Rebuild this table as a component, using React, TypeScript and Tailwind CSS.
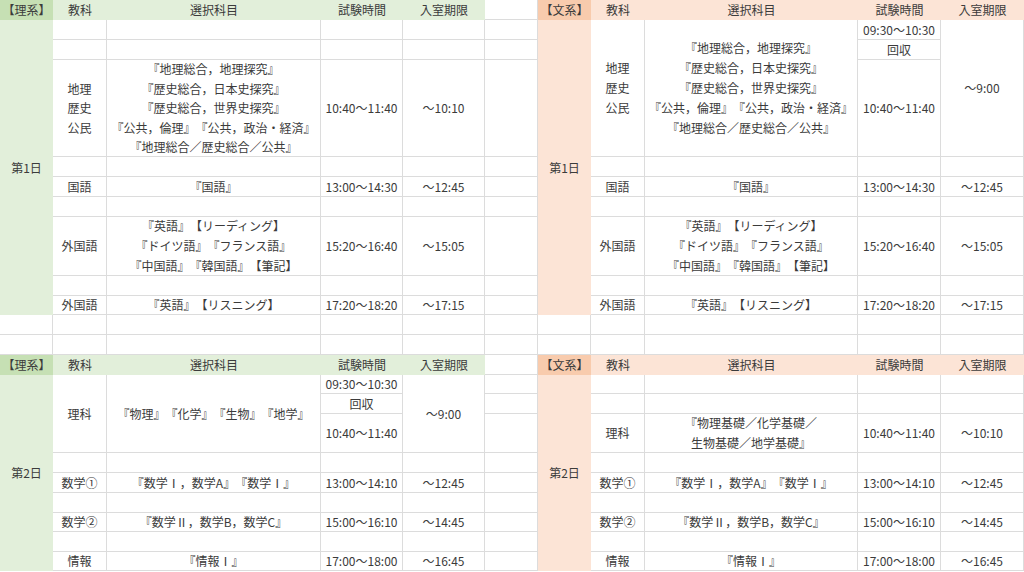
import type { ReactNode } from "react";

type Tone = "w" | "g" | "G" | "o" | "O";

// Excel-ish fills: filled cells hide their gridlines
const TONES: Record<Tone, string> = {
  w: "bg-white border-r border-b border-[#dcdcdc]",
  g: "bg-[#e2efda]",
  G: "bg-[#c6e0b4]",
  o: "bg-[#fce4d6]",
  O: "bg-[#f8cbad]",
};

function Cell({
  tone = "w",
  span = "",
  children,
}: {
  tone?: Tone;
  span?: string;
  children?: ReactNode;
}) {
  return (
    <div
      className={`flex flex-col items-center justify-center whitespace-nowrap text-center ${TONES[tone]} ${span}`}
    >
      {children}
    </div>
  );
}

function Blank({ n }: { n: number }) {
  return (
    <>
      {Array.from({ length: n }).map((_, i) => (
        <Cell key={i} />
      ))}
    </>
  );
}

function Lines({ items, tight = false }: { items: string[]; tight?: boolean }) {
  return (
    <>
      {items.map((t) => (
        <span key={t} className={tight ? "block leading-[19.4px]" : "block leading-[20px]"}>
          {t}
        </span>
      ))}
    </>
  );
}

function Header({ side }: { side: "ri" | "bun" }) {
  const dark: Tone = side === "ri" ? "G" : "O";
  const light: Tone = side === "ri" ? "g" : "o";
  return (
    <>
      <Cell tone={dark}>{side === "ri" ? "【理系】" : "【文系】"}</Cell>
      <Cell tone={light}>教科</Cell>
      <Cell tone={light}>選択科目</Cell>
      <Cell tone={light}>試験時間</Cell>
      <Cell tone={light}>入室期限</Cell>
    </>
  );
}

const SHAKAI = [
  "『地理総合，地理探究』",
  "『歴史総合，日本史探究』",
  "『歴史総合，世界史探究』",
  "『公共，倫理』『公共，政治・経済』",
  "『地理総合／歴史総合／公共』",
];

const GAIKOKU = ["『英語』【リーディング】", "『ドイツ語』『フランス語』", "『中国語』『韓国語』【筆記】"];

function Row4({ a, b, c, d }: { a: ReactNode; b: ReactNode; c: string; d: string }) {
  return (
    <>
      <Cell>{a}</Cell>
      <Cell>{b}</Cell>
      <Cell>{c}</Cell>
      <Cell>{d}</Cell>
    </>
  );
}

export default function App() {
  return (
    <div className="h-[572px] w-[1024px] overflow-hidden bg-white font-['Noto_Sans_CJK_JP','Noto_Sans',sans-serif] text-[12px] text-[#3b3b3b] [text-spacing-trim:space-all]">
      <div className="grid grid-cols-[53px_54px_214px_82px_82px_53px_53px_54px_213px_83px_83px] grid-rows-[20px_20px_20px_97px_20px_20px_20px_59px_20px_19px_20px_20px_20px_19px_20px_39px_20px_20px_20px_19px_20px_19px]">
        {/* row 1: headers */}
        <Header side="ri" />
        <Cell />
        <Header side="bun" />

        {/* row 2 */}
        <Cell tone="g" span="row-span-9">第1日</Cell>
        <Blank n={5} />
        <Cell tone="o" span="row-span-9">第1日</Cell>
        <Cell span="row-span-3">
          <Lines items={["地理", "歴史", "公民"]} />
        </Cell>
        <Cell span="row-span-3">
          <Lines items={SHAKAI} />
        </Cell>
        <Cell>09:30〜10:30</Cell>
        <Cell span="row-span-3">〜9:00</Cell>

        {/* row 3 */}
        <Blank n={5} />
        <Cell>回収</Cell>

        {/* row 4 */}
        <Cell>
          <Lines items={["地理", "歴史", "公民"]} tight />
        </Cell>
        <Cell>
          <Lines items={SHAKAI} tight />
        </Cell>
        <Cell>10:40〜11:40</Cell>
        <Cell>〜10:10</Cell>
        <Cell />
        <Cell>10:40〜11:40</Cell>

        {/* row 5 */}
        <Blank n={5} />
        <Blank n={4} />

        {/* row 6 */}
        <Row4 a="国語" b="『国語』" c="13:00〜14:30" d="〜12:45" />
        <Cell />
        <Row4 a="国語" b="『国語』" c="13:00〜14:30" d="〜12:45" />

        {/* row 7 */}
        <Blank n={5} />
        <Blank n={4} />

        {/* row 8 */}
        <Row4 a="外国語" b={<Lines items={GAIKOKU} />} c="15:20〜16:40" d="〜15:05" />
        <Cell />
        <Row4 a="外国語" b={<Lines items={GAIKOKU} />} c="15:20〜16:40" d="〜15:05" />

        {/* row 9 */}
        <Blank n={5} />
        <Blank n={4} />

        {/* row 10 */}
        <Row4 a="外国語" b="『英語』【リスニング】" c="17:20〜18:20" d="〜17:15" />
        <Cell />
        <Row4 a="外国語" b="『英語』【リスニング】" c="17:20〜18:20" d="〜17:15" />

        {/* rows 11-12: spacer */}
        <Blank n={11} />
        <Blank n={11} />

        {/* row 13: headers */}
        <Header side="ri" />
        <Cell />
        <Header side="bun" />

        {/* row 14 */}
        <Cell tone="g" span="row-span-9">第2日</Cell>
        <Cell span="row-span-3">理科</Cell>
        <Cell span="row-span-3">『物理』『化学』『生物』『地学』</Cell>
        <Cell>09:30〜10:30</Cell>
        <Cell span="row-span-3">〜9:00</Cell>
        <Cell />
        <Cell tone="o" span="row-span-9">第2日</Cell>
        <Blank n={4} />

        {/* row 15 */}
        <Cell>回収</Cell>
        <Cell />
        <Blank n={4} />

        {/* row 16 */}
        <Cell>10:40〜11:40</Cell>
        <Cell />
        <Row4
          a="理科"
          b={<Lines items={["『物理基礎／化学基礎／", "生物基礎／地学基礎』"]} />}
          c="10:40〜11:40"
          d="〜10:10"
        />

        {/* row 17 */}
        <Blank n={5} />
        <Blank n={4} />

        {/* row 18 */}
        <Row4 a="数学①" b="『数学Ⅰ，数学A』『数学Ⅰ』" c="13:00〜14:10" d="〜12:45" />
        <Cell />
        <Row4 a="数学①" b="『数学Ⅰ，数学A』『数学Ⅰ』" c="13:00〜14:10" d="〜12:45" />

        {/* row 19 */}
        <Blank n={5} />
        <Blank n={4} />

        {/* row 20 */}
        <Row4 a="数学②" b="『数学Ⅱ，数学B，数学C』" c="15:00〜16:10" d="〜14:45" />
        <Cell />
        <Row4 a="数学②" b="『数学Ⅱ，数学B，数学C』" c="15:00〜16:10" d="〜14:45" />

        {/* row 21 */}
        <Blank n={5} />
        <Blank n={4} />

        {/* row 22 */}
        <Row4 a="情報" b="『情報Ⅰ』" c="17:00〜18:00" d="〜16:45" />
        <Cell />
        <Row4 a="情報" b="『情報Ⅰ』" c="17:00〜18:00" d="〜16:45" />
      </div>
    </div>
  );
}
